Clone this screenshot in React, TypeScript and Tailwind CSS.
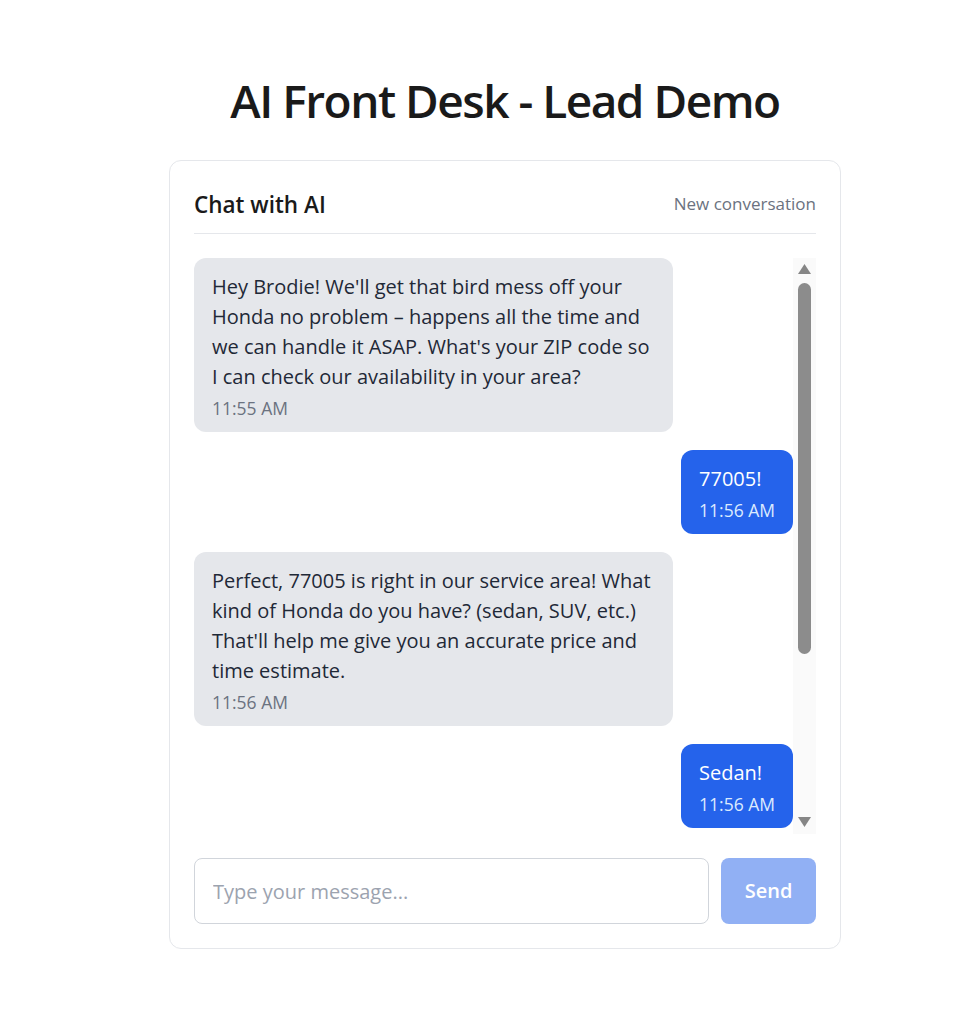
import React from "react";

type Msg = { from: "ai" | "user"; lines: string[]; time: string };

const messages: Msg[] = [
  {
    from: "ai",
    lines: [
      "Hey Brodie! We'll get that bird mess off your",
      "Honda no problem \u2013 happens all the time and",
      "we can handle it ASAP. What's your ZIP code so",
      "I can check our availability in your area?",
    ],
    time: "11:55 AM",
  },
  { from: "user", lines: ["77005!"], time: "11:56 AM" },
  {
    from: "ai",
    lines: [
      "Perfect, 77005 is right in our service area! What",
      "kind of Honda do you have? (sedan, SUV, etc.)",
      "That'll help me give you an accurate price and",
      "time estimate.",
    ],
    time: "11:56 AM",
  },
  { from: "user", lines: ["Sedan!"], time: "11:56 AM" },
];

function Bubble({ m }: { m: Msg }) {
  const isUser = m.from === "user";
  return (
    <div className={isUser ? "flex justify-end" : "flex justify-start"}>
      <div
        className={
          isUser
            ? "rounded-xl bg-[#2563eb] px-[18px] pt-[14px] pb-3 text-white"
            : "w-[80%] rounded-xl bg-[#e5e7eb] px-[18px] pt-[14px] pb-3 text-[#1f2937]"
        }
      >
        <div className="text-[20px] leading-[30px]">
          {m.lines.map((l, i) => (
            <div key={i} className="whitespace-nowrap">
              {l}
            </div>
          ))}
        </div>
        <div
          className={
            isUser
              ? "mt-1 text-[17.5px] leading-[24px] text-[#dbeafe]"
              : "mt-1 text-[17.5px] leading-[24px] text-[#6b7280]"
          }
        >
          {m.time}
        </div>
      </div>
    </div>
  );
}

function FakeScrollbar() {
  return (
    <div className="flex w-[23px] flex-col items-center bg-[#fafafa] pt-[4px] pb-[4px]">
      <svg width="15" height="12" viewBox="0 0 15 12" className="mt-[1px]">
        <polygon points="7.5,1 14,11 1,11" fill="#868686" />
      </svg>
      <div className="mt-[8px] h-[371px] w-[13px] rounded-full bg-[#8c8c8c]" />
      <div className="flex-1" />
      <svg width="15" height="12" viewBox="0 0 15 12" className="mb-[2px]">
        <polygon points="1,1 14,1 7.5,11" fill="#868686" />
      </svg>
    </div>
  );
}

export default function App() {
  return (
    <div
      className="min-h-screen bg-white pl-[56px]"
      style={{ fontFamily: "'Open Sans', 'Noto Sans', sans-serif" }}
    >
      <div className="mx-auto flex w-[672px] flex-col items-center pt-[76px]">
        <h1 className="text-[46px] leading-[48px] font-semibold tracking-[-1.5px] text-[#1a1a1a]">
          AI Front Desk - Lead Demo
        </h1>
        <div className="mt-[36px] w-full rounded-xl border border-[#e5e7eb] bg-white px-6 pt-6 pb-6">
          <div className="flex items-center justify-between border-b border-[#e5e7eb] pt-[5px] pb-[13px]">
            <h2 className="text-[22.5px] leading-[30px] font-semibold text-[#1a1a1a]">
              Chat with AI
            </h2>
            <span className="-mt-[2px] text-[17px] leading-[24px] text-[#6b7280]">New conversation</span>
          </div>
          <div className="mt-6 flex h-[576px] overflow-hidden">
            <div className="flex flex-1 flex-col gap-[18px]">
              {messages.map((m, i) => (
                <Bubble key={i} m={m} />
              ))}
            </div>
            <FakeScrollbar />
          </div>
          <div className="mt-6 flex gap-3">
            <input
              type="text"
              placeholder="Type your message..."
              className="h-[66px] flex-1 rounded-lg border border-[#d1d5db] px-[18px] text-[20px] text-[#1f2937] outline-none placeholder:text-[#9ca3af]"
            />
            <button
              disabled
              className="h-[66px] w-[95px] rounded-lg bg-[#2563eb] text-[20px] font-semibold text-white opacity-50"
            >
              Send
            </button>
          </div>
        </div>
      </div>
    </div>
  );
}
